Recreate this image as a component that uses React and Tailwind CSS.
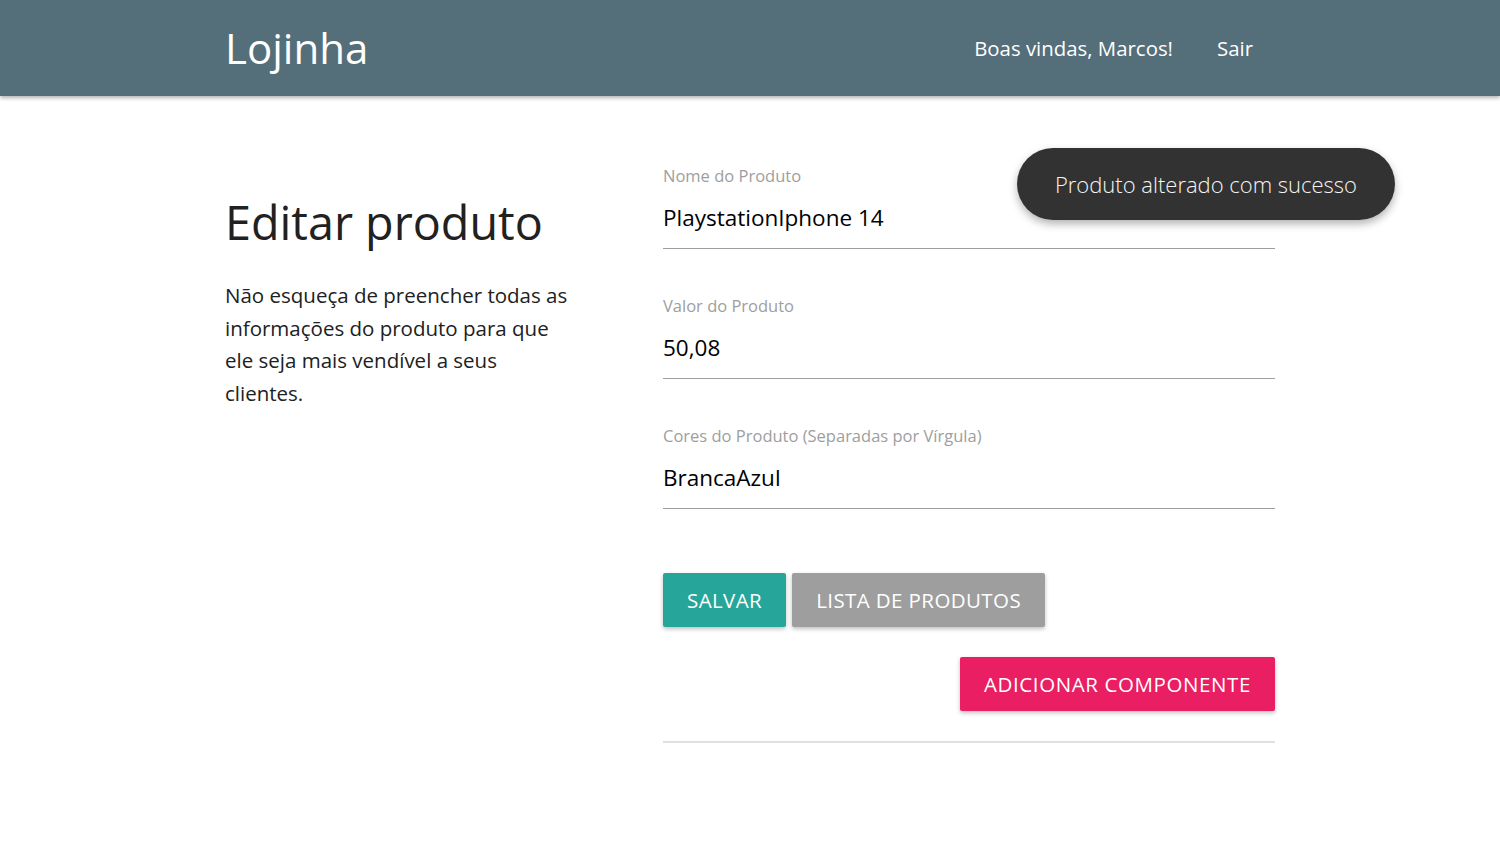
import React from "react";

const font = { fontFamily: '"Open Sans", "Noto Sans", sans-serif' };

function Field({ label, value, className = "" }) {
  return (
    <div className={className}>
      <label className="block text-[16.5px] leading-[24px] text-[#9e9e9e]">{label}</label>
      <div className="h-[61px] pt-[15px] border-b border-[#9e9e9e] text-[22.5px] leading-[30px] text-black">
        {value}
      </div>
    </div>
  );
}

export default function App() {
  return (
    <div className="min-h-[847px] bg-white relative" style={font}>
      <nav className="h-[96px] bg-[#546e7a] shadow-[0_2px_4px_rgba(0,0,0,0.3)] text-white">
        <div className="w-[1050px] mx-auto h-full flex items-center justify-between">
          <a className="text-[42px] leading-none -mt-[1px]">Lojinha</a>
          <ul className="flex items-center text-[20.4px]">
            <li className="px-[22px]">Boas vindas, Marcos!</li>
            <li className="px-[22px]">Sair</li>
          </ul>
        </div>
      </nav>

      <main className="w-[1050px] mx-auto flex">
        <section className="w-[438px] shrink-0 pt-[94px] text-[#212121]">
          <h1 className="text-[46.7px] leading-[64px] mb-[25px]">Editar produto</h1>
          <p className="text-[20.5px] leading-[32.5px]">
            Não esqueça de preencher todas as
            <br />
            informações do produto para que
            <br />
            ele seja mais vendível a seus
            <br />
            clientes.
          </p>
        </section>

        <section className="flex-1 pt-[68px]">
          <Field label="Nome do Produto" value="PlaystationIphone 14" />
          <Field className="mt-[45px]" label="Valor do Produto" value="50,08" />
          <Field
            className="mt-[45px]"
            label="Cores do Produto (Separadas por Vírgula)"
            value="BrancaAzul"
          />

          <div className="flex gap-[6px] mt-[64px]">
            <button className="h-[54px] px-[24px] rounded-[2px] bg-[#26a69a] text-white text-[20.5px] uppercase tracking-[0.4px] shadow-[0_2px_4px_rgba(0,0,0,0.25)]">
              Salvar
            </button>
            <button className="h-[54px] px-[24px] rounded-[2px] bg-[#9e9e9e] text-white text-[20.5px] uppercase tracking-[0.4px] shadow-[0_2px_4px_rgba(0,0,0,0.25)]">
              Lista de produtos
            </button>
          </div>
          <div className="flex justify-end mt-[30px]">
            <button className="h-[54px] px-[24px] rounded-[2px] bg-[#e91e63] text-white text-[20.5px] uppercase tracking-[0.6px] shadow-[0_2px_4px_rgba(0,0,0,0.25)]">
              Adicionar componente
            </button>
          </div>
          <hr className="mt-[30px] border-0 h-[2px] bg-[#e0e0e0]" />
        </section>
      </main>

      <div className="absolute top-[148px] right-[105px] h-[72px] px-[38px] rounded-full bg-[#323232] text-[#f5f5f5] text-[22px] font-light flex items-center shadow-[0_4px_8px_rgba(0,0,0,0.3)]">
        Produto alterado com sucesso
      </div>
    </div>
  );
}
